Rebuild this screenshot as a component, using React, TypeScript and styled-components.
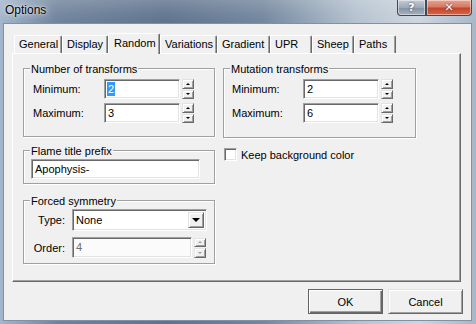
import styled, { createGlobalStyle, css } from 'styled-components';

const GlobalStyle = createGlobalStyle`
  html, body { margin: 0; padding: 0; background: #fff; }
  body {
    font-family: 'Liberation Sans', Arial, sans-serif;
    font-size: 11px;
    color: #000;
  }
  * { box-sizing: border-box; }
`;

const raised = css`
  background: #f0f0f0;
  border-top: 1px solid #e3e3e3;
  border-left: 1px solid #e3e3e3;
  border-right: 1px solid #696969;
  border-bottom: 1px solid #696969;
  box-shadow: inset 1px 1px 0 #fff, inset -1px -1px 0 #a0a0a0;
`;

const sunken = css`
  border-top: 1px solid #a0a0a0;
  border-left: 1px solid #a0a0a0;
  border-right: 1px solid #fff;
  border-bottom: 1px solid #fff;
  box-shadow: inset 1px 1px 0 #696969, inset -1px -1px 0 #e3e3e3;
`;

const Window = styled.div`
  width: 476px;
  height: 324px;
  display: flex;
  flex-direction: column;
  overflow: hidden;
  background: linear-gradient(
    90deg,
    #a3b6cb 0%,
    #6f839c 12%,
    #5f738d 35%,
    #72869e 55%,
    #b5c2cf 75%,
    #cdd6df 88%,
    #a7b7c8 100%
  );
`;

const TitleBar = styled.div`
  height: 23px;
  display: flex;
  align-items: flex-start;
  background: linear-gradient(
    180deg,
    rgba(255, 255, 255, 0.18) 0%,
    rgba(255, 255, 255, 0.05) 60%,
    rgba(0, 0, 0, 0) 100%
  );
`;

const TitleText = styled.div`
  margin: 2px 0 0 5px;
  font-size: 12px;
  line-height: 16px;
  color: #000;
  text-shadow: 0 0 6px rgba(255, 255, 255, 0.9), 0 0 2px rgba(255, 255, 255, 0.8);
`;

const CaptionButtons = styled.div`
  margin-left: auto;
  margin-right: 4px;
  display: flex;
`;

const CaptionButton = styled.div<{ $kind: 'help' | 'close' }>`
  width: ${(p) => (p.$kind === 'help' ? 29 : 46)}px;
  height: 16px;
  display: flex;
  align-items: center;
  justify-content: center;
  font-family: 'DejaVu Sans', sans-serif;
  font-weight: bold;
  font-size: 11px;
  color: #fff;
  text-shadow: 0 0 2px #333;
  border: 1px solid #3f4a57;
  border-top: none;
  border-radius: ${(p) => (p.$kind === 'help' ? '0 0 0 4px' : '0 0 4px 0')};
  background: ${(p) =>
    p.$kind === 'help'
      ? 'linear-gradient(180deg, #c4ccd6 0%, #9ea9b6 50%, #8794a3 55%, #a5b1be 100%)'
      : 'linear-gradient(180deg, #e9a392 0%, #d67a63 45%, #c1452b 55%, #d6684a 100%)'};
  box-shadow: inset 0 0 0 1px rgba(255, 255, 255, 0.45);
`;

const Client = styled.div`
  flex: 1;
  margin: 0 4px 3px 3px;
  border: 1px solid #7f91a6;
  background: #f0f0f0;
  padding: 9px 8px 0 8px;
  display: flex;
  flex-direction: column;
`;

const TabStrip = styled.div`
  display: flex;
  align-items: flex-end;
  height: 20px;
  margin-left: 2px;
`;

const Tab = styled.div<{ $active?: boolean; $w: number }>`
  position: relative;
  z-index: ${(p) => (p.$active ? 1 : 0)};
  width: ${(p) => p.$w}px;
  height: ${(p) => (p.$active ? 21 : 18)}px;
  margin-bottom: ${(p) => (p.$active ? -1 : 0)}px;
  padding: 0 0 ${(p) => (p.$active ? 3 : 1)}px ${(p) => (p.$active ? 5 : 4)}px;
  display: flex;
  align-items: center;
  background: #f0f0f0;
  border-top: 1px solid #fff;
  border-left: 1px solid #fff;
  border-right: 1px solid #696969;
  border-radius: 2px 2px 0 0;
  box-shadow: inset -1px 0 0 #a0a0a0;
  white-space: nowrap;
`;

const Pane = styled.div`
  height: 229px;
  margin-right: 2px;
  background: #f0f0f0;
  border-top: 1px solid #fff;
  border-left: 1px solid #fff;
  border-right: 1px solid #696969;
  border-bottom: 1px solid #696969;
  box-shadow: inset -1px -1px 0 #a0a0a0;
  padding: 14px 0 0 10px;
`;

const Columns = styled.div`
  display: grid;
  grid-template-columns: 192px 193px;
  column-gap: 8px;
  align-items: start;
`;

const Column = styled.div`
  display: flex;
  flex-direction: column;
`;

const Group = styled.div<{ $h: number; $gap?: number; $pad?: string; $rowGap?: number }>`
  position: relative;
  height: ${(p) => p.$h}px;
  margin-top: ${(p) => p.$gap ?? 0}px;
  border: 1px solid #a0a0a0;
  box-shadow: inset 1px 1px 0 #fff, 1px 1px 0 #fff;
  padding: ${(p) => p.$pad ?? '10px 0 0 9px'};
  display: flex;
  flex-direction: column;
  gap: ${(p) => p.$rowGap ?? 4}px;
`;

const Caption = styled.span`
  position: absolute;
  top: -6px;
  left: 6px;
  padding: 0 1px;
  line-height: 13px;
  background: #f0f0f0;
`;

const FieldRow = styled.div<{ $label: number }>`
  display: grid;
  grid-template-columns: ${(p) => p.$label}px auto auto;
  align-items: center;
  justify-content: start;
  column-gap: 1px;
`;

const Label = styled.span<{ $right?: boolean }>`
  text-align: ${(p) => (p.$right ? 'right' : 'left')};
  padding-right: ${(p) => (p.$right ? 6 : 0)}px;
`;

const TextField = styled.div<{ $w: number; $h?: number; $disabled?: boolean }>`
  ${sunken};
  width: ${(p) => p.$w}px;
  height: ${(p) => p.$h ?? 20}px;
  background: ${(p) => (p.$disabled ? '#fbfbfb' : '#fff')};
  color: ${(p) => (p.$disabled ? '#6d6d6d' : '#000')};
  padding: 0 0 1px 3px;
  display: flex;
  align-items: center;
`;

const Highlight = styled.span`
  background: #3399ff;
  color: #fff;
  line-height: 14px;
  padding: 0 1px;
  margin-left: -1px;
`;

const Spin = styled.div`
  display: flex;
  flex-direction: column;
  gap: 1px;
  width: 12px;
  height: 20px;
  margin-left: 1px;
`;

const SpinButton = styled.div<{ $dir: 'up' | 'down'; $disabled?: boolean }>`
  ${raised};
  flex: 1;
  display: flex;
  align-items: center;
  justify-content: center;
  &::after {
    content: '';
    border-left: 2px solid transparent;
    border-right: 2px solid transparent;
    ${(p) => (p.$dir === 'up' ? 'border-bottom' : 'border-top')}: 2px solid
      ${(p) => (p.$disabled ? '#a0a0a0' : '#000')};
  }
`;

const Combo = styled.div`
  ${sunken};
  width: 135px;
  height: 22px;
  background: #fff;
  display: flex;
  align-items: stretch;
  padding: 2px;
`;

const ComboText = styled.span`
  flex: 1;
  display: flex;
  align-items: center;
  padding-left: 1px;
`;

const ComboButton = styled.div`
  ${raised};
  width: 16px;
  display: flex;
  align-items: center;
  justify-content: center;
  &::after {
    content: '';
    border-left: 4px solid transparent;
    border-right: 4px solid transparent;
    border-top: 4px solid #000;
  }
`;

const CheckRow = styled.label`
  display: flex;
  align-items: center;
  gap: 4px;
  margin: 10px 0 0 1px;
`;

const CheckBox = styled.span`
  ${sunken};
  width: 13px;
  height: 13px;
  background: #fff;
`;

const ButtonRow = styled.div`
  display: flex;
  justify-content: flex-end;
  gap: 5px;
  margin-top: 7px;
`;

const DialogButton = styled.div<{ $default?: boolean }>`
  ${raised};
  width: 75px;
  height: 25px;
  display: flex;
  align-items: center;
  justify-content: center;
  ${(p) =>
    p.$default &&
    css`
      border: 1px solid #646464;
      box-shadow: inset 1px 1px 0 #fff, inset -1px -1px 0 #696969,
        inset -2px -2px 0 #a0a0a0;
    `}
`;

const tabs = [
  { label: 'General', w: 48 },
  { label: 'Display', w: 46 },
  { label: 'Random', w: 52, active: true },
  { label: 'Variations', w: 57 },
  { label: 'Gradient', w: 53 },
  { label: 'UPR', w: 42 },
  { label: 'Sheep', w: 42 },
  { label: 'Paths', w: 42 },
];

function Spinner({ disabled }: { disabled?: boolean }) {
  return (
    <Spin>
      <SpinButton $dir='up' $disabled={disabled} />
      <SpinButton $dir='down' $disabled={disabled} />
    </Spin>
  );
}

export default function App() {
  return (
    <>
      <GlobalStyle />
      <Window>
        <TitleBar>
          <TitleText>Options</TitleText>
          <CaptionButtons>
            <CaptionButton $kind='help'>?</CaptionButton>
            <CaptionButton $kind='close'>✕</CaptionButton>
          </CaptionButtons>
        </TitleBar>
        <Client>
          <TabStrip>
            {tabs.map((t) => (
              <Tab key={t.label} $w={t.w} $active={t.active}>
                {t.label}
              </Tab>
            ))}
          </TabStrip>
          <Pane>
            <Columns>
              <Column>
                <Group $h={69}>
                  <Caption>Number of transforms</Caption>
                  <FieldRow $label={70}>
                    <Label>Minimum:</Label>
                    <TextField $w={76}>
                      <Highlight>2</Highlight>
                    </TextField>
                    <Spinner />
                  </FieldRow>
                  <FieldRow $label={70}>
                    <Label>Maximum:</Label>
                    <TextField $w={76}>3</TextField>
                    <Spinner />
                  </FieldRow>
                </Group>
                <Group $h={34} $gap={13} $pad='8px 0 0 7px'>
                  <Caption>Flame title prefix</Caption>
                  <TextField $w={169}>Apophysis-</TextField>
                </Group>
                <Group $h={64} $gap={16} $pad='8px 0 0 7px' $rowGap={6}>
                  <Caption>Forced symmetry</Caption>
                  <FieldRow $label={40}>
                    <Label $right>Type:</Label>
                    <Combo>
                      <ComboText>None</ComboText>
                      <ComboButton />
                    </Combo>
                  </FieldRow>
                  <FieldRow $label={40}>
                    <Label $right>Order:</Label>
                    <TextField $w={120} $h={21} $disabled>
                      4
                    </TextField>
                    <Spinner disabled />
                  </FieldRow>
                </Group>
              </Column>
              <Column>
                <Group $h={70} $pad='10px 0 0 8px'>
                  <Caption>Mutation transforms</Caption>
                  <FieldRow $label={70}>
                    <Label>Minimum:</Label>
                    <TextField $w={76}>2</TextField>
                    <Spinner />
                  </FieldRow>
                  <FieldRow $label={70}>
                    <Label>Maximum:</Label>
                    <TextField $w={76}>6</TextField>
                    <Spinner />
                  </FieldRow>
                </Group>
                <CheckRow>
                  <CheckBox />
                  Keep background color
                </CheckRow>
              </Column>
            </Columns>
          </Pane>
          <ButtonRow>
            <DialogButton $default>OK</DialogButton>
            <DialogButton>Cancel</DialogButton>
          </ButtonRow>
        </Client>
      </Window>
    </>
  );
}
